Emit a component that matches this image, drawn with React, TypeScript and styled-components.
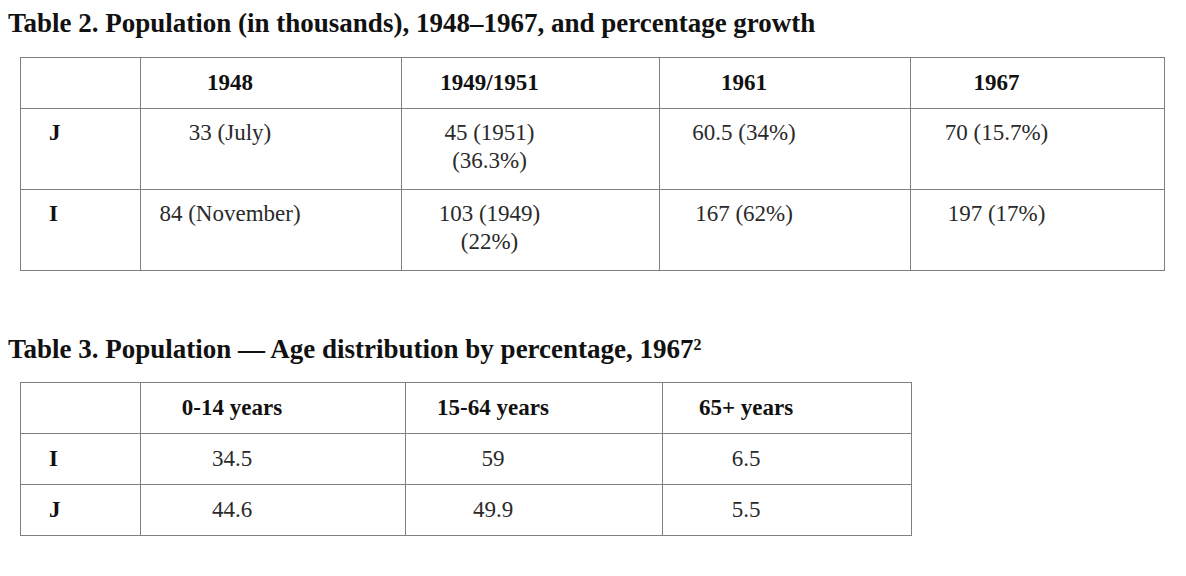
import styled, { createGlobalStyle } from "styled-components";

const GlobalStyle = createGlobalStyle`
  body {
    margin: 0;
    background: #ffffff;
  }
`;

const serif = `"Liberation Serif", "Times New Roman", serif`;

type Row = { label: string; cells: string[][] };

const popHeaders = ["1948", "1949/1951", "1961", "1967"];
const popWidths = [120, 261, 258, 251, 254];
const popRows: Row[] = [
  {
    label: "J",
    cells: [["33 (July)"], ["45 (1951)", "(36.3%)"], ["60.5 (34%)"], ["70 (15.7%)"]],
  },
  {
    label: "I",
    cells: [["84 (November)"], ["103 (1949)", "(22%)"], ["167 (62%)"], ["197 (17%)"]],
  },
];

const ageHeaders = ["0-14 years", "15-64 years", "65+ years"];
const ageWidths = [120, 265, 257, 249];
const ageRows: Row[] = [
  { label: "I", cells: [["34.5"], ["59"], ["6.5"]] },
  { label: "J", cells: [["44.6"], ["49.9"], ["5.5"]] },
];

const App = () => {
  return (
    <Page>
      <GlobalStyle />
      <Caption>Table 2. Population (in thousands), 1948–1967, and percentage growth</Caption>
      <Table>
        <colgroup>
          {popWidths.map((w, i) => (
            <Col key={i} $w={w} />
          ))}
        </colgroup>
        <thead>
          <tr>
            <HeadCell />
            {popHeaders.map((h) => (
              <HeadCell key={h}>{h}</HeadCell>
            ))}
          </tr>
        </thead>
        <tbody>
          {popRows.map((r) => (
            <tr key={r.label}>
              <LabelCell $tall>{r.label}</LabelCell>
              {r.cells.map((lines, i) => (
                <DataCell key={i} $tall>
                  {lines.map((l) => (
                    <Line key={l}>{l}</Line>
                  ))}
                </DataCell>
              ))}
            </tr>
          ))}
        </tbody>
      </Table>

      <Caption $second>
        Table 3. Population — Age distribution by percentage, 1967<Sup>2</Sup>
      </Caption>
      <Table $tight>
        <colgroup>
          {ageWidths.map((w, i) => (
            <Col key={i} $w={w} />
          ))}
        </colgroup>
        <thead>
          <tr>
            <HeadCell />
            {ageHeaders.map((h) => (
              <HeadCell key={h}>{h}</HeadCell>
            ))}
          </tr>
        </thead>
        <tbody>
          {ageRows.map((r) => (
            <tr key={r.label}>
              <LabelCell>{r.label}</LabelCell>
              {r.cells.map((lines, i) => (
                <DataCell key={i}>{lines[0]}</DataCell>
              ))}
            </tr>
          ))}
        </tbody>
      </Table>
    </Page>
  );
};

export default App;

const Page = styled.div`
  padding: 9px 0 40px 8px;
  font-family: ${serif};
`;

const Caption = styled.h2<{ $second?: boolean }>`
  margin: ${(p) => (p.$second ? "64px 0 0" : "0")};
  font-family: ${serif};
  font-size: 27px;
  line-height: 28px;
  font-weight: 700;
  color: #111;
  white-space: nowrap;
`;

const Sup = styled.sup`
  font-size: 16px;
  vertical-align: 8px;
  line-height: 0;
`;

const Table = styled.table<{ $tight?: boolean }>`
  margin: ${(p) => (p.$tight ? "19px" : "20px")} 0 0 12px;
  border-collapse: collapse;
  table-layout: fixed;
  font-family: ${serif};
`;

const Col = styled.col<{ $w: number }>`
  width: ${(p) => p.$w}px;
`;

const HeadCell = styled.th`
  height: 51px;
  padding: 0 82px 0 0;
  border: 1px solid #808080;
  font-family: ${serif};
  font-size: 23px;
  font-weight: 700;
  line-height: 28px;
  color: #111;
  text-align: center;
  vertical-align: middle;
  box-sizing: border-box;
`;

const LabelCell = styled.td<{ $tall?: boolean }>`
  height: ${(p) => (p.$tall ? "81px" : "51px")};
  padding: ${(p) => (p.$tall ? "10px 0 0 28px" : "0 0 0 28px")};
  border: 1px solid #808080;
  font-family: ${serif};
  font-size: 23px;
  font-weight: 700;
  line-height: 28px;
  color: #111;
  vertical-align: ${(p) => (p.$tall ? "top" : "middle")};
  box-sizing: border-box;
`;

const DataCell = styled.td<{ $tall?: boolean }>`
  height: ${(p) => (p.$tall ? "81px" : "51px")};
  padding: ${(p) => (p.$tall ? "10px 82px 0 0" : "0 82px 0 0")};
  border: 1px solid #808080;
  font-family: ${serif};
  font-size: 23px;
  line-height: 28px;
  color: #2a2a2a;
  text-align: center;
  vertical-align: ${(p) => (p.$tall ? "top" : "middle")};
  box-sizing: border-box;
`;

const Line = styled.div`
  white-space: nowrap;
`;
